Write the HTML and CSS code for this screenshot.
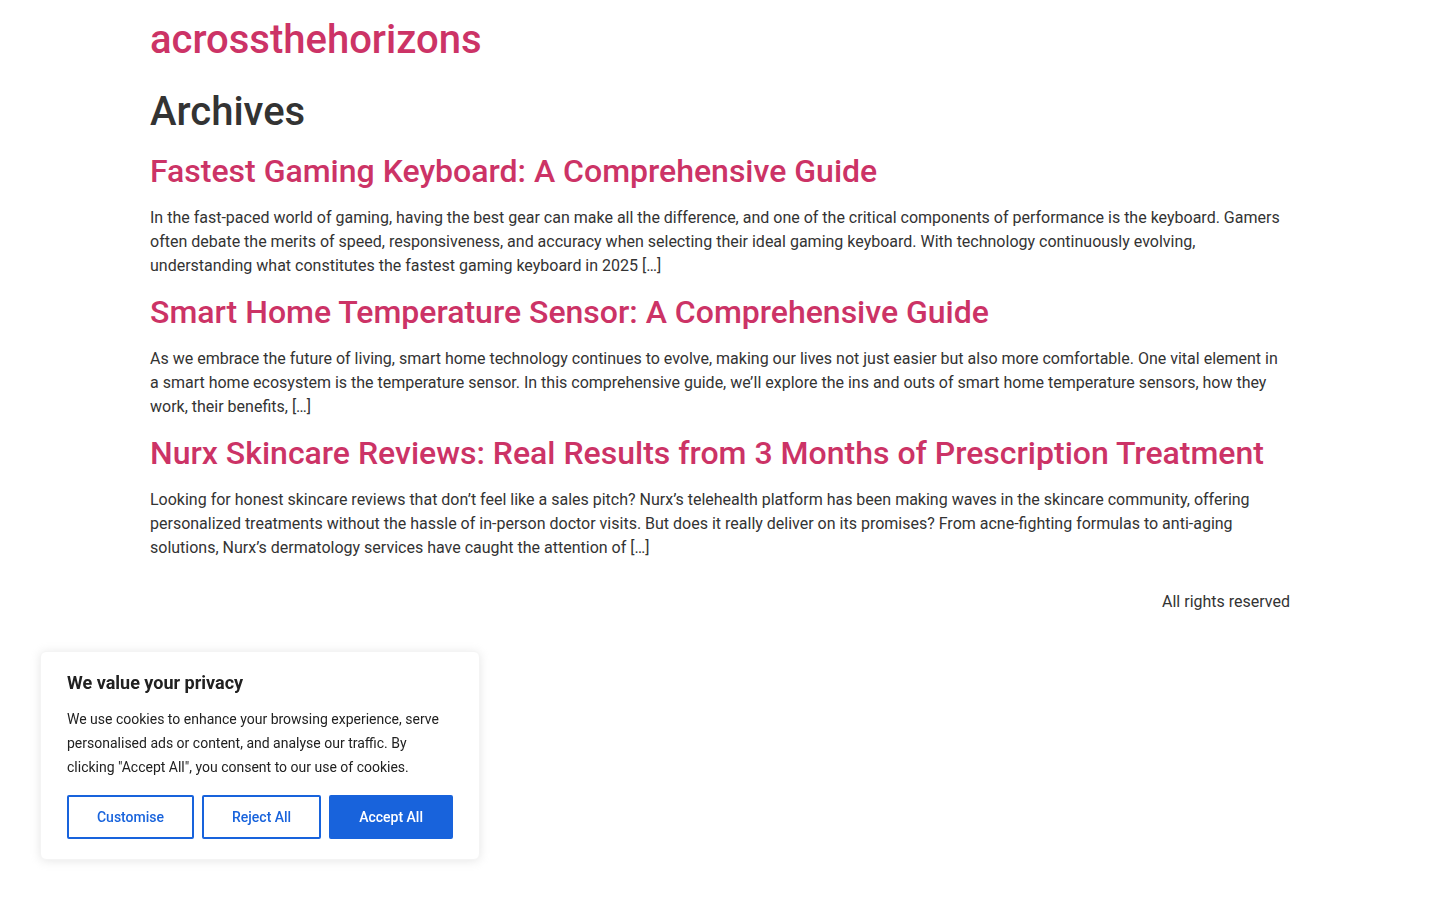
FILE: index.html
```html
<!DOCTYPE html>
<html lang="en">
<head>
    <meta charset="utf-8">
    <title>Archives - acrossthehorizons</title>
    <link rel="stylesheet" href="styles.css">
</head>
<body>
    <header class="site-header">
        <h1 class="site-title"><a href="#">acrossthehorizons</a></h1>
    </header>

    <main class="site-main">
        <div class="page-header">
            <h1 class="entry-title">Archives</h1>
        </div>

        <article class="post">
            <h2 class="post-title"><a href="#">Fastest Gaming Keyboard: A Comprehensive Guide</a></h2>
            <p>In the fast-paced world of gaming, having the best gear can make all the difference, and one of the critical components of performance is the keyboard. Gamers often debate the merits of speed, responsiveness, and accuracy when selecting their ideal gaming keyboard. With technology continuously evolving, understanding what constitutes the fastest gaming keyboard in 2025 [&hellip;]</p>
        </article>

        <article class="post">
            <h2 class="post-title"><a href="#">Smart Home Temperature Sensor: A Comprehensive Guide</a></h2>
            <p>As we embrace the future of living, smart home technology continues to evolve, making our lives not just easier but also more comfortable. One vital element in a smart home ecosystem is the temperature sensor. In this comprehensive guide, we&rsquo;ll explore the ins and outs of smart home temperature sensors, how they work, their benefits, [&hellip;]</p>
        </article>

        <article class="post">
            <h2 class="post-title"><a href="#">Nurx Skincare Reviews: Real Results from 3 Months of Prescription Treatment</a></h2>
            <p>Looking for honest skincare reviews that don&rsquo;t feel like a sales pitch? Nurx&rsquo;s telehealth platform has been making waves in the skincare community, offering personalized treatments without the hassle of in-person doctor visits. But does it really deliver on its promises? From acne-fighting formulas to anti-aging solutions, Nurx&rsquo;s dermatology services have caught the attention of [&hellip;]</p>
        </article>
    </main>

    <footer class="site-footer">
        <p class="copyright">All rights reserved</p>
    </footer>

    <!-- Cookie consent box -->
    <div class="cky-consent">
        <p class="cky-title">We value your privacy</p>
        <p class="cky-desc">We use cookies to enhance your browsing experience, serve personalised ads or content, and analyse our traffic. By clicking "Accept All", you consent to our use of cookies.</p>
        <div class="cky-buttons">
            <button class="cky-btn">Customise</button>
            <button class="cky-btn">Reject All</button>
            <button class="cky-btn cky-btn-accept">Accept All</button>
        </div>
    </div>
</body>
</html>
```

FILE: styles.css
```css
body {
    margin: 0;
    background: #fff;
    color: #333;
    font-family: Roboto, "Liberation Sans", sans-serif;
    font-size: 16px;
    line-height: 1.5;
}

a {
    color: #c36;
    text-decoration: none;
}

h1, h2 {
    font-weight: 500;
    line-height: 1.2;
    margin-top: 0.5rem;
    margin-bottom: 1rem;
}

h1 {
    font-size: 2.5rem;
}

h2 {
    font-size: 2rem;
}

p {
    margin-top: 0;
    margin-bottom: 0.9rem;
}

.site-header,
.site-main,
.site-footer {
    max-width: 1140px;
    margin-left: auto;
    margin-right: auto;
}

.site-header {
    padding: 1rem 0;
}

.site-title {
    margin: 0;
}

.site-footer {
    padding-top: 16px;
    padding-bottom: 1rem;
    text-align: right;
}

.copyright {
    margin: 0;
}

/* cookie box, pinned bottom left */
.cky-consent {
    position: fixed;
    left: 40px;
    bottom: 40px;
    width: 440px;
    box-sizing: border-box;
    padding: 24px 26px 20px;
    background: #fff;
    border: 1px solid #f4f4f4;
    border-radius: 6px;
    box-shadow: 0 1px 10px 0 rgba(172, 171, 171, 0.3);
    color: #212121;
}

.cky-title {
    margin: -5px 0 12px;
    font-size: 18px;
    font-weight: 700;
    line-height: 24px;
}

.cky-desc {
    margin: 0;
    font-size: 14px;
    line-height: 24px;
}

.cky-buttons {
    display: flex;
    gap: 8px;
    margin-top: 16px;
}

.cky-btn {
    flex: auto;
    padding: 8px 20px;
    background: transparent;
    border: 2px solid #1863dc;
    border-radius: 2px;
    color: #1863dc;
    font-family: Roboto, "Liberation Sans", sans-serif;
    font-size: 14px;
    font-weight: 500;
    line-height: 24px;
    cursor: pointer;
}

.cky-btn-accept {
    background: #1863dc;
    color: #fff;
}
```
